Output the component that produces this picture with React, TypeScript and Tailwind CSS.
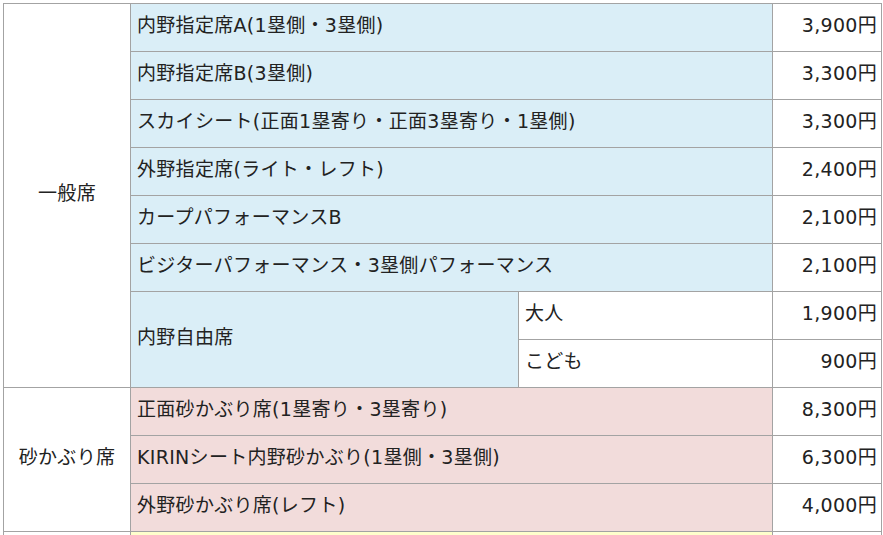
const BLUE = "bg-[#daeef7]"
const PINK = "bg-[#f2dcdb]"

const cell = "border border-[#a3a3a3] h-[48px] p-0 pb-[6px] align-middle"

type Row = { name: string; price: string }

const general: Row[] = [
  { name: "内野指定席A(1塁側・3塁側)", price: "3,900円" },
  { name: "内野指定席B(3塁側)", price: "3,300円" },
  { name: "スカイシート(正面1塁寄り・正面3塁寄り・1塁側)", price: "3,300円" },
  { name: "外野指定席(ライト・レフト)", price: "2,400円" },
  { name: "カープパフォーマンスB", price: "2,100円" },
  { name: "ビジターパフォーマンス・3塁側パフォーマンス", price: "2,100円" },
]

const sand: Row[] = [
  { name: "正面砂かぶり席(1塁寄り・3塁寄り)", price: "8,300円" },
  { name: "KIRINシート内野砂かぶり(1塁側・3塁側)", price: "6,300円" },
  { name: "外野砂かぶり席(レフト)", price: "4,000円" },
]

export default function App() {
  return (
    <div className="bg-white pl-[3px] pt-[3px] text-[19px] leading-[24px] tracking-[0.3px] text-[#222] font-['DejaVu_Sans','Noto_Sans_CJK_JP',sans-serif]">
      <table className="table-fixed border-collapse w-[878px]">
        <colgroup>
          <col className="w-[127px]" />
          <col className="w-[388px]" />
          <col className="w-[254px]" />
          <col className="w-[109px]" />
        </colgroup>
        <tbody>
          {general.map((r, i) => (
            <tr key={r.name}>
              {i === 0 && (
                <td rowSpan={8} className={`${cell} text-center`}>一般席</td>
              )}
              <td colSpan={2} className={`${cell} ${BLUE} pl-[6px]`}>{r.name}</td>
              <td className={`${cell} text-right pr-[4px]`}>{r.price}</td>
            </tr>
          ))}
          <tr>
            <td rowSpan={2} className={`${cell} ${BLUE} pl-[6px]`}>内野自由席</td>
            <td className={`${cell} pl-[6px]`}>大人</td>
            <td className={`${cell} text-right pr-[4px]`}>1,900円</td>
          </tr>
          <tr>
            <td className={`${cell} pl-[6px]`}>こども</td>
            <td className={`${cell} text-right pr-[4px]`}>900円</td>
          </tr>
          {sand.map((r, i) => (
            <tr key={r.name}>
              {i === 0 && (
                <td rowSpan={3} className={`${cell} text-center`}>砂かぶり席</td>
              )}
              <td colSpan={2} className={`${cell} ${PINK} pl-[6px]`}>{r.name}</td>
              <td className={`${cell} text-right pr-[4px]`}>{r.price}</td>
            </tr>
          ))}
          <tr>
            <td className={cell}></td>
            <td colSpan={2} className={`${cell} bg-[#ffffcc]`}></td>
            <td className={cell}></td>
          </tr>
        </tbody>
      </table>
    </div>
  )
}
